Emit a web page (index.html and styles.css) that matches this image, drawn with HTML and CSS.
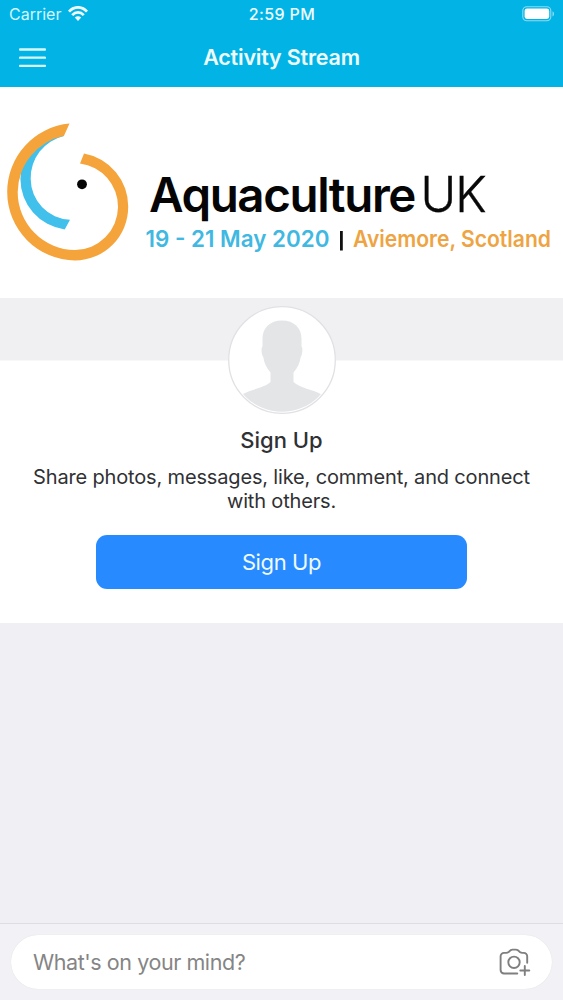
FILE: index.html
```html
<!DOCTYPE html>
<html lang="en">
<head>
<meta charset="utf-8">
<title>Activity Stream</title>
<link rel="stylesheet" href="styles.css">
</head>
<body>
<div class="app">
  <header class="header">
    <div class="status">
      <div class="carrier"><span class="carrier-name">Carrier</span>
        <svg class="wifi" width="20" height="15" viewBox="0 0 20 15">
          <g fill="none" stroke="#f2fdff" stroke-width="2.7">
            <path d="M1 5.6C6-.1 14-.1 19 5.6"/>
            <path d="M4.2 9.1c3.5-3.7 8.1-3.7 11.6 0"/>
          </g>
          <path d="M6.8 11.5c2-1.8 4.4-1.8 6.4 0L10 14.9z" fill="#f2fdff"/>
        </svg>
      </div>
      <div class="time">2:59 PM</div>
      <svg class="battery" width="33" height="16" viewBox="0 0 33 16">
        <rect x=".8" y=".8" width="28" height="14" rx="4" fill="none" stroke="#8bdcf4" stroke-width="1.1"/>
        <rect x="2.6" y="2.6" width="24.6" height="10.4" rx="2.4" fill="#fff"/>
        <path d="M30.5 5.2c2 .8 2 4.4 0 5.2z" fill="#8bdcf4"/>
      </svg>
    </div>
    <div class="nav">
      <svg class="menu" width="27" height="20" viewBox="0 0 27 20">
        <path d="M1 1.5h25M1 9.7h25M1 17.8h25" stroke="#d8fbff" stroke-width="2.3" stroke-linecap="round"/>
      </svg>
      <h1 class="nav-title">Activity Stream</h1>
    </div>
  </header>

  <section class="banner">
    <svg class="logo" width="563" height="211" viewBox="0 87 563 211">
      <path d="M62 129A51 51 0 0 0 20.400 179A51 51 0 0 0 64.700 229.400L70 219.700A41 41 0 0 1 30.700 179A43 43 0 0 1 64 136z" fill="#40c0eb"/>
      <path d="M69.500 123.600A68.500 68.500 0 0 0 7.200 192A68.500 68.500 0 0 0 75 260.500A53.500 53.500 0 0 0 128.200 207A53.500 53.500 0 0 0 84 153.600L80 163.500A43.500 43.500 0 0 1 118 207A43.500 43.500 0 0 1 75 250.100A58 58 0 0 1 17.700 192A58 58 0 0 1 64 135.800z" fill="#f5a43c"/>
      <circle cx="82" cy="184.3" r="4.9" fill="#050505"/>
      <text class="logo-name" x="149" y="212" textLength="266" lengthAdjust="spacingAndGlyphs">Aquaculture</text>
      <text class="logo-region" x="420.5" y="212" textLength="65" lengthAdjust="spacingAndGlyphs">UK</text>
      <text class="logo-date" x="145.5" y="247.2" textLength="184" lengthAdjust="spacingAndGlyphs">19 - 21 May 2020</text>
      <path d="M341.4 231v19.5" stroke="#111" stroke-width="2.8"/>
      <text class="logo-place" x="353" y="247.2" textLength="198" lengthAdjust="spacingAndGlyphs">Aviemore, Scotland</text>
    </svg>
  </section>

  <section class="card">
    <svg class="avatar" width="108" height="108" viewBox="0 0 108 108">
      <defs><clipPath id="face"><circle cx="54" cy="54" r="51.8"/></clipPath></defs>
      <circle cx="54" cy="54" r="53.3" fill="#fff" stroke="#e1e1e5" stroke-width="1.3"/>
      <path clip-path="url(#face)" fill="#e4e5e7" d="M54 14.500c12 0 19.500 7.500 19.500 18v8c1.500.8 1 8.500-.8 10.500-.7 6-3.200 11-7.200 15.500V76c6 6 20 7.500 28 12.500v20H14V88.500c8-5 22-6.500 28.500-12.500V66.500c-4-4.500-6.500-9.500-7.200-15.500-2-2-2.300-9.700-.8-10.500v-8C34.500 22 42 14.500 54 14.500z"/>
    </svg>
    <h2 class="card-title">Sign Up</h2>
    <p class="card-text">Share photos, messages, like, comment, and connect<br>with others.</p>
    <button class="signup">Sign Up</button>
  </section>

  <main class="stream"></main>

  <footer class="composer">
    <div class="field">
      <span class="placeholder">What's on your mind?</span>
      <svg class="camera" width="32" height="28" viewBox="0 0 32 28" fill="none" stroke="#7f7f7f" stroke-width="1.9" stroke-linecap="round" stroke-linejoin="round">
        <path d="M18.300 25.500H5a3.400 3.400 0 0 1-3.400-3.400V8.300A3.400 3.400 0 0 1 5 4.900h2.200c1.500 0 2-.6 2.800-1.200C11.300 2.200 11.800 1.600 13.400 1.600h3.600c1.600 0 2.200.6 3.500 2.100.8.600 1.300 1.200 2.800 1.200H24.800a3.400 3.400 0 0 1 3.400 3.400v6.500"/>
        <circle cx="15" cy="14.300" r="5.700"/>
        <path d="M25.800 18v9M21.300 22.500h9"/>
      </svg>
    </div>
  </footer>
</div>
</body>
</html>
```
FILE: styles.css
```css
* { box-sizing: border-box; }
body { margin: 0; font-family: Inter, "Liberation Sans", sans-serif; }
.app { width: 563px; height: 1000px; display: flex; flex-direction: column; background: #f0eff4; overflow: hidden; }
svg { display: block; flex: none; }

.header { height: 87px; flex: none; background: #02b4e5; color: #effcff; }
.status { height: 29px; display: grid; grid-template-columns: 1fr auto 1fr; align-items: center; padding: 0 8px 0 9px; }
.carrier { display: flex; align-items: center; gap: 7px; font-size: 16px; color: #d3f7ff; }
.carrier-name { margin-top: -1px; }
.wifi { margin-bottom: 2px; }
.time { margin-top: -1px; font-size: 16px; font-weight: 500; letter-spacing: .35px; }
.battery { justify-self: end; margin-bottom: 1px; }
.nav { height: 57px; display: grid; grid-template-columns: 1fr auto 1fr; align-items: center; padding: 0 19px; }
.menu { margin-top: 1px; }
.nav-title { margin: -2px 0 0; font-size: 21.5px; font-weight: 600; line-height: 30px; letter-spacing: -.2px; }

.banner { height: 211px; flex: none; background: #fff; }
.logo-name { font-size: 47.5px; font-weight: 600; letter-spacing: -1.4px; fill: #050505; }
.logo-region { font-size: 49px; font-weight: 300; letter-spacing: -1px; fill: #080808; stroke: #080808; stroke-width: .4px; }
.logo-date, .logo-place { font-size: 22.5px; font-weight: 600; }
.logo-date { fill: #40b8e2; }
.logo-place { fill: #eea443; }

.card { height: 325px; flex: none; display: flex; flex-direction: column; align-items: center; padding-top: 8px; background: linear-gradient(#f0f0f3 62px, #fff 63px); color: #303134; }
.card-title { margin: 12px 0 0; font-size: 22px; font-weight: 500; line-height: 28px; }
.card-text { margin: 11px 0 0; font-size: 20px; line-height: 24px; letter-spacing: -.16px; text-align: center; white-space: nowrap; }
.signup { width: 371px; height: 54px; margin-top: 22px; padding: 0; border: 0; border-radius: 11px; background: #278bff; color: #effaff; font: 400 22px Inter, sans-serif; letter-spacing: -.4px; }

.stream { flex: 1; }
.composer { height: 77px; flex: none; padding: 11px 11px 0; border-top: 1px solid #dedee2; background: #f2f2f6; }
.field { height: 54px; display: flex; align-items: center; justify-content: space-between; padding: 0 21px 0 22px; border-radius: 27px; background: #fff; box-shadow: 0 0 1px #d4d4d8; }
.placeholder { font-size: 21.5px; letter-spacing: -.43px; color: #858585; }
```
